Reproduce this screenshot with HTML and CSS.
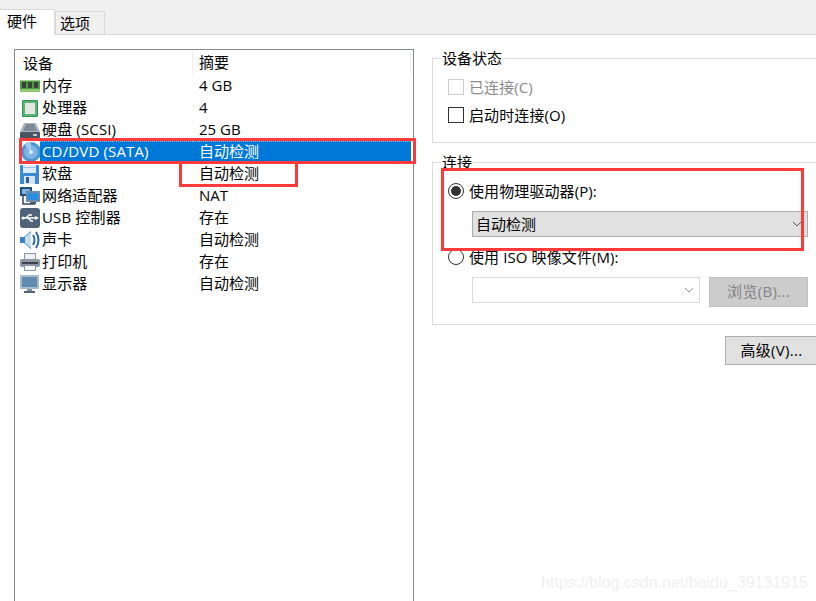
FILE: index.html
```html
<!DOCTYPE html>
<html lang="zh-CN">
<head>
    <meta charset="UTF-8">
    <meta name="viewport" content="width=device-width, initial-scale=1.0">
    <title>虚拟机设置</title>
    <link rel="stylesheet" href="styles.css">
</head>
<body>
    <div class="tabs">
        <div class="tab active">硬件</div>
        <div class="tab">选项</div>
    </div>

    <div class="content">
        <!-- Device list on the left -->
        <div class="device-list">
            <div class="list-head">
                <div class="head-name">设备</div>
                <div class="head-summary">摘要</div>
            </div>
            <div class="row">
                <svg class="icon" viewBox="0 0 20 20"><rect x="0" y="4" width="20" height="12" fill="#4f9a45"/><rect x="0" y="4" width="20" height="1" fill="#9fd08a"/><rect x="0" y="13" width="20" height="3" fill="#8fc86c"/><rect x="2" y="6" width="4" height="6" fill="#3a3f3a"/><rect x="8" y="6" width="4" height="6" fill="#3a3f3a"/><rect x="14" y="6" width="4" height="6" fill="#3a3f3a"/></svg>
                <div class="col-name">内存</div>
                <div class="col-summary">4 GB</div>
            </div>
            <div class="row">
                <svg class="icon" viewBox="0 0 20 20"><rect x="2" y="2" width="16" height="17" rx="1" fill="#2f9354"/><rect x="3" y="3" width="14" height="15" fill="#5cb377"/><rect x="5" y="5" width="10" height="11" fill="#e4e7e0"/></svg>
                <div class="col-name">处理器</div>
                <div class="col-summary">4</div>
            </div>
            <div class="row">
                <svg class="icon" viewBox="0 0 20 20"><path d="M4 3h12l4 9H0z" fill="#a9b5c1"/><path d="M6 4h8l3 7H3z" fill="#7d8b99"/><rect x="0" y="12" width="20" height="6" rx="1" fill="#4a545f"/><rect x="13" y="14" width="4" height="2" fill="#c3cad1"/></svg>
                <div class="col-name">硬盘 (SCSI)</div>
                <div class="col-summary">25 GB</div>
            </div>
            <div class="row selected">
                <svg class="icon" viewBox="0 0 20 20"><circle cx="11" cy="10" r="10" fill="#4f93d2"/><circle cx="11" cy="10" r="7" fill="#7fb5e4"/><path d="M11 10L5 3a10 10 0 0 1 6-3z" fill="#a5cdee"/><circle cx="11" cy="10" r="2" fill="#dcedfa"/></svg>
                <div class="col-name">CD/DVD (SATA)</div>
                <div class="col-summary">自动检测</div>
            </div>
            <div class="row">
                <svg class="icon" viewBox="0 0 20 20"><rect x="0" y="1" width="19" height="19" rx="1" fill="#3c8ad6"/><rect x="3" y="1" width="13" height="8" fill="#dcecf8"/><rect x="3" y="3" width="13" height="1" fill="#9cc3e6"/><rect x="4" y="12" width="11" height="8" fill="#d5e4f0"/><rect x="6" y="13" width="3" height="6" fill="#2f5f94"/></svg>
                <div class="col-name">软盘</div>
                <div class="col-summary">自动检测</div>
            </div>
            <div class="row">
                <svg class="icon" viewBox="0 0 20 20"><path d="M3 9v9h12" stroke="#33475c" stroke-width="1.5" fill="none"/><rect x="0" y="1" width="12" height="9" fill="#24507c"/><rect x="2" y="3" width="8" height="5" fill="#7db4e2"/><rect x="6" y="5" width="14" height="11" fill="#6c8caa"/><rect x="8" y="7" width="10" height="7" fill="#2a8fe0"/><rect x="10" y="16" width="6" height="2" fill="#44586c"/></svg>
                <div class="col-name">网络适配器</div>
                <div class="col-summary">NAT</div>
            </div>
            <div class="row">
                <svg class="icon" viewBox="0 0 20 20"><rect x="0" y="0" width="20" height="20" rx="3" fill="#4f6478"/><path d="M2 10h14M6 10l3-3h3M8 10l3 3h2" stroke="#fff" stroke-width="1.4" fill="none"/><path d="M15 8l4 2-4 2z" fill="#fff"/><circle cx="3" cy="10" r="1.5" fill="#fff"/></svg>
                <div class="col-name">USB 控制器</div>
                <div class="col-summary">存在</div>
            </div>
            <div class="row">
                <svg class="icon" viewBox="0 0 20 20"><path d="M0 7h4l7-6v18l-7-6H0z" fill="#3f7fc4"/><path d="M5 7l6-5v16l-6-5z" fill="#c4def4"/><path d="M13 5q3 5 0 10M16 2q5 8 0 16" stroke="#2a69ae" stroke-width="2" fill="none"/></svg>
                <div class="col-name">声卡</div>
                <div class="col-summary">自动检测</div>
            </div>
            <div class="row">
                <svg class="icon" viewBox="0 0 20 20"><rect x="4.5" y="1.5" width="11" height="7" fill="#eef1f4" stroke="#8b96a2"/><rect x="0" y="7" width="20" height="8" rx="2" fill="#8a96a3"/><rect x="2" y="10" width="16" height="2" fill="#39434d"/><rect x="16" y="8" width="2" height="1" fill="#5fcf6a"/><rect x="4.5" y="13.5" width="11" height="5" fill="#f4f6f8" stroke="#8b96a2"/></svg>
                <div class="col-name">打印机</div>
                <div class="col-summary">存在</div>
            </div>
            <div class="row">
                <svg class="icon" viewBox="0 0 20 20"><rect x="0" y="1" width="19" height="14" fill="#a9bccd"/><rect x="2" y="3" width="15" height="10" fill="#5f8bb0"/><rect x="7" y="15" width="5" height="2" fill="#7f92a4"/><rect x="4" y="17" width="11" height="2" fill="#4f6478"/></svg>
                <div class="col-name">显示器</div>
                <div class="col-summary">自动检测</div>
            </div>
        </div>

        <!-- Settings on the right -->
        <div class="settings">
            <fieldset class="group status">
                <legend>设备状态</legend>
                <div class="option disabled"><span class="check"></span><span class="label">已连接(C)</span></div>
                <div class="option"><span class="check"></span><span class="label">启动时连接(O)</span></div>
            </fieldset>

            <fieldset class="group connection">
                <legend>连接</legend>
                <div class="option"><span class="radio on"></span><span class="label">使用物理驱动器(P):</span></div>
                <div class="select filled">
                    <span class="label">自动检测</span>
                    <svg class="arrow" viewBox="0 0 10 6"><path d="M1 1l4 4 4-4" stroke="#555" fill="none"/></svg>
                </div>
                <div class="option"><span class="radio"></span><span class="label">使用 ISO 映像文件(M):</span></div>
                <div class="iso-row">
                    <div class="select empty">
                        <svg class="arrow" viewBox="0 0 10 6"><path d="M1 1l4 4 4-4" stroke="#999" fill="none"/></svg>
                    </div>
                    <div class="button browse">浏览(B)...</div>
                </div>
            </fieldset>

            <div class="button advanced">高级(V)...</div>
        </div>
    </div>

    <!-- Red annotation boxes drawn over the dialog -->
    <div class="mark mark-row"></div>
    <div class="mark mark-floppy"></div>
    <div class="mark mark-drive"></div>

    <div class="watermark">https://blog.csdn.net/baidu_39131915</div>
</body>
</html>
```

FILE: styles.css
```css
body {
    margin: 0;
    height: 601px;
    overflow: hidden;
    position: relative;
    background-color: #fff;
    color: #000;
    font-family: "Open Sans", "Noto Sans CJK SC", sans-serif;
    font-size: 15px;
}
.tabs {
    height: 35px;
    box-sizing: border-box;
    display: flex;
    align-items: flex-end;
    background-color: #f0f0f0;
    border-bottom: 1px solid #d9d9d9;
}
.tab {
    width: 50px;
    height: 23px;
    box-sizing: border-box;
    border: 1px solid #d9d9d9;
    border-bottom: none;
    padding-left: 4px;
    line-height: 22px;
}
.tab.active {
    width: 55px;
    height: 26px;
    margin-bottom: -1px;
    padding-left: 7px;
    background-color: #fff;
    border-left: none;
    line-height: 22px;
}
.content {
    display: flex;
    padding: 14px 0 0 14px;
}
.device-list {
    width: 400px;
    height: 560px;
    box-sizing: border-box;
    border: 1px solid #828790;
    flex-shrink: 0;
}
.list-head {
    display: flex;
    align-items: center;
    height: 25px;
}
.head-name {
    width: 177px;
    box-sizing: border-box;
    padding-left: 8px;
}
.head-summary {
    flex: 1;
    height: 23px;
    line-height: 23px;
    padding-left: 6px;
    margin-right: 2px;
    border-left: 1px solid #eee;
    border-right: 1px solid #eee;
}
.row {
    display: flex;
    align-items: stretch;
    height: 22px;
    padding-left: 5px;
    padding-right: 2px;
    line-height: 21px;
}
.icon {
    width: 20px;
    height: 20px;
    margin-top: 1px;
    flex-shrink: 0;
}
.col-name {
    width: 153px;
    box-sizing: border-box;
    padding-left: 2px;
    white-space: nowrap;
    letter-spacing: 0.15px;
}
.col-summary {
    flex: 1;
    padding-left: 6px;
}
.selected .col-name,
.selected .col-summary {
    background: repeating-linear-gradient(90deg, #8cc4ee 0 1px, #0078d7 1px 2px) top / 100% 1px no-repeat, #0078d7;
    color: #fff;
}
.settings {
    width: 384px;
    margin-left: 18px;
    flex-shrink: 0;
}
.group {
    margin: 0;
    padding: 0;
    box-sizing: border-box;
    border: 1px solid #dcdcdc;
    border-right: none;
}
.group legend {
    margin-left: 8px;
    padding: 0 1px;
    line-height: 18px;
}
.status {
    height: 94px;
    padding-top: 6px;
}
.connection {
    height: 172px;
    margin-top: 10px;
    padding-top: 6px;
}
.option {
    display: flex;
    align-items: center;
    height: 28px;
    padding-left: 15px;
    letter-spacing: 0.1px;
}
.option.disabled {
    color: #8a8a8a;
}
.label {
    margin-bottom: 2px;
}
.check,
.radio {
    width: 16px;
    height: 16px;
    box-sizing: border-box;
    border: 1px solid #333;
    margin-right: 5px;
}
.disabled .check {
    border-color: #ccc;
}
.radio {
    border-radius: 50%;
    display: flex;
    align-items: center;
    justify-content: center;
}
.radio.on::after {
    content: "";
    width: 10px;
    height: 10px;
    border-radius: 50%;
    background-color: #333;
}
.select {
    height: 26px;
    box-sizing: border-box;
    display: flex;
    align-items: center;
    justify-content: space-between;
    padding: 0 5px 0 3px;
}
.select.filled {
    width: 336px;
    margin: 6px 0 6px 39px;
    background-color: #e1e1e1;
    border: 1px solid #adadad;
}
.select.empty {
    width: 228px;
    justify-content: flex-end;
    background-color: #fff;
    border: 1px solid #d9d9d9;
}
.arrow {
    width: 10px;
    height: 6px;
}
.iso-row {
    display: flex;
    align-items: flex-start;
    margin: 6px 0 0 39px;
}
.button {
    box-sizing: border-box;
    height: 30px;
    line-height: 26px;
    text-align: center;
    letter-spacing: 0.3px;
    background-color: #e1e1e1;
    border: 1px solid #adadad;
}
.browse {
    width: 99px;
    margin-left: 9px;
    background-color: #cccccc;
    border-color: #bfbfbf;
    color: #838383;
}
.advanced {
    width: 93px;
    height: 29px;
    margin: 11px 0 0 293px;
}
.mark {
    position: absolute;
    box-sizing: border-box;
    border: 3px solid #fb3a3a;
}
.mark-row {
    left: 19px;
    top: 138px;
    width: 397px;
    height: 26px;
}
.mark-floppy {
    left: 179px;
    top: 161px;
    width: 119px;
    height: 26px;
}
.mark-drive {
    left: 441px;
    top: 168px;
    width: 363px;
    height: 83px;
}
.watermark {
    position: absolute;
    right: 8px;
    top: 574px;
    font-family: "Liberation Sans", sans-serif;
    font-size: 16px;
    color: #f0f0f0;
}
```
